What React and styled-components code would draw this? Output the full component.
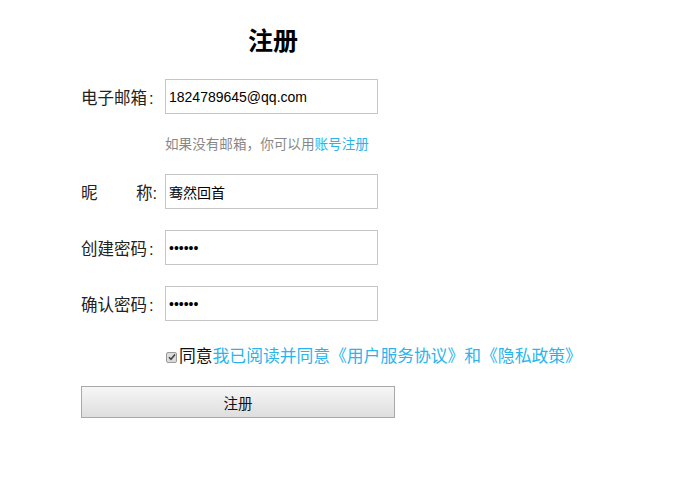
import { createGlobalStyle, styled } from "styled-components";

const GlobalStyle = createGlobalStyle`
  body {
    margin: 0;
    background: #fff;
    font-family: "Liberation Sans", Arial, "Noto Sans CJK SC", sans-serif;
    color: #222;
  }
`;

const Page = styled.div`
  width: 692px;
  height: 491px;
  padding: 26px 0 0 81px;
  box-sizing: border-box;
`;

const Title = styled.h1`
  margin: 0 0 23px 0;
  width: 384px;
  text-align: center;
  font-size: 25px;
  font-weight: bold;
  line-height: 30px;
  color: #000;
`;

const Row = styled.div`
  display: flex;
  align-items: center;
  height: 35px;
  margin-bottom: ${(p) => p.$gap || 21}px;
`;

const Label = styled.label`
  width: 84px;
  font-size: 16.5px;
  color: #222;
  display: flex;
  align-items: baseline;
  justify-content: ${(p) => (p.$spread ? "space-between" : "flex-start")};
  padding-right: ${(p) => (p.$spread ? 8 : 0)}px;
  box-sizing: border-box;
`;

const Colon = styled.span`
  margin-left: 2px;
`;

const Input = styled.input`
  width: 213px;
  height: 35px;
  box-sizing: border-box;
  border: 1px solid #c6c6c6;
  padding: 0 3px;
  font-size: 14px;
  font-family: "Liberation Sans", Arial, "Noto Sans CJK SC", sans-serif;
  color: #000;
  outline: none;
`;

const Hint = styled.div`
  margin: 0 0 20px 84px;
  font-size: 13.6px;
  color: #888;
  line-height: 18px;
`;

const Link = styled.a`
  color: #2ab4ee;
  text-decoration: none;
`;

const Agree = styled.div`
  display: flex;
  align-items: center;
  padding-top: 3px;
  margin: 0 0 18px 85px;
  font-size: 16.8px;
  line-height: 22px;
  color: #111;
`;

const Check = styled.span`
  width: 11px;
  height: 11px;
  border: 1px solid #9a9a9a;
  border-radius: 2px;
  background: #dcdcdc;
  display: inline-flex;
  align-items: center;
  justify-content: center;
  margin-right: 2px;
  box-sizing: border-box;
`;

const Button = styled.button`
  width: 314px;
  height: 32px;
  border: 1px solid #a9a9a9;
  background: linear-gradient(#f6f6f6, #dedede);
  font-size: 14.5px;
  color: #111;
  font-family: "Liberation Sans", Arial, "Noto Sans CJK SC", sans-serif;
  padding: 0;
`;

export default function App() {
  return (
    <>
      <GlobalStyle />
      <Page>
        <Title>注册</Title>
        <Row $gap={22}>
          <Label>电子邮箱<Colon>:</Colon></Label>
          <Input defaultValue="1824789645@qq.com" />
        </Row>
        <Hint>
          如果没有邮箱，你可以用<Link href="#">账号注册</Link>
        </Hint>
        <Row>
          <Label $spread>
            <span>昵</span>
            <span>称:</span>
          </Label>
          <Input defaultValue="骞然回首" />
        </Row>
        <Row>
          <Label>创建密码<Colon>:</Colon></Label>
          <Input type="password" defaultValue="123456" />
        </Row>
        <Row $gap={22}>
          <Label>确认密码<Colon>:</Colon></Label>
          <Input type="password" defaultValue="123456" />
        </Row>
        <Agree>
          <Check>
            <svg width="8" height="8" viewBox="0 0 8 8">
              <path d="M1 4.2 L3 6.2 L7 1.5" fill="none" stroke="#444" strokeWidth="1.6" />
            </svg>
          </Check>
          同意<Link href="#">我已阅读并同意《用户服务协议》和《隐私政策》</Link>
        </Agree>
        <Button>注册</Button>
      </Page>
    </>
  );
}
